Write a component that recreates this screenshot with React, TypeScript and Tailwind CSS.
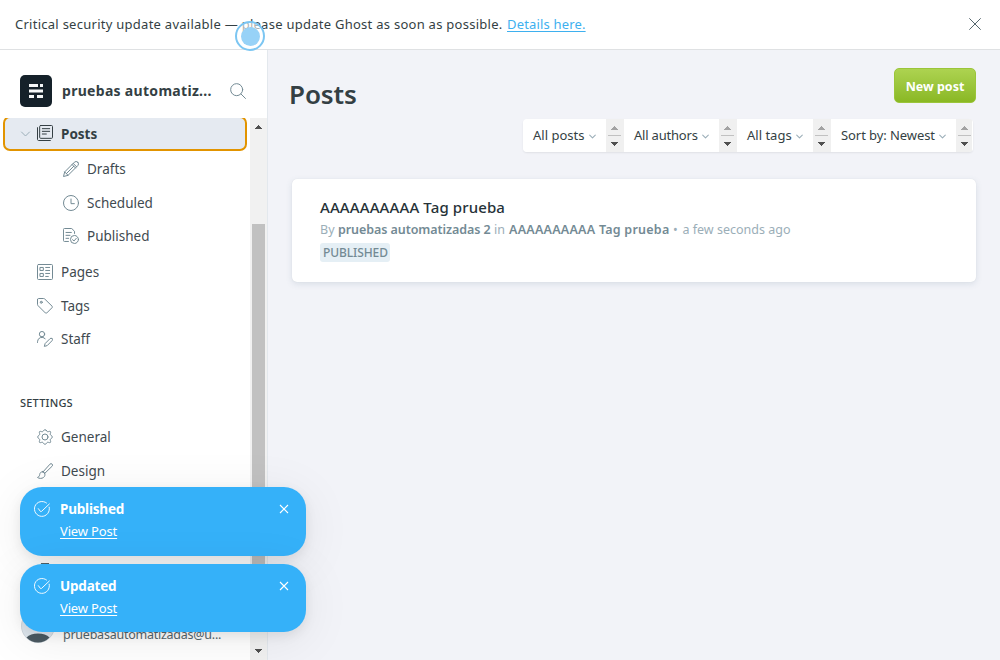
import type { ReactNode } from "react";

function Icon({ children, className = "stroke-[#738a94]" }: { children: ReactNode; className?: string }) {
  return (
    <svg viewBox="0 0 24 24" className={`h-4 w-4 shrink-0 fill-none ${className}`} strokeWidth={1.5} strokeLinecap="round" strokeLinejoin="round">
      {children}
    </svg>
  );
}

const PostsIcon = () => (
  <Icon className="stroke-[#343f44]">
    <rect x="4" y=".75" width="19.25" height="19.25" rx="1.5" />
    <path d="M.75 4v17.75c0 .8.7 1.5 1.5 1.5H20M8 5.5h11M8 9.5h11M8 13.5h6" />
  </Icon>
);
const DraftsIcon = () => (
  <Icon>
    <path d="M22.2 1.8a3.6 3.6 0 0 0-5.1 0L2.5 16.4.75 23.25l6.85-1.75L22.2 6.9a3.6 3.6 0 0 0 0-5.1zM15.3 3.6l5.1 5.1M13.6 5.3l5.1 5.1M2.5 16.4l5.1 5.1M5.2 18.8 16.2 7.8" />
  </Icon>
);
const ScheduledIcon = () => (
  <Icon>
    <circle cx="12" cy="12" r="11.25" />
    <path d="M12 6v7h5" />
  </Icon>
);
const PublishedIcon = () => (
  <Icon>
    <path d="M8.2 20.2H2.2a1.5 1.5 0 0 1-1.5-1.5V2.2A1.5 1.5 0 0 1 2.2.75h10.9l4.2 4.2V8.2M4.5 6.7h8M4.5 11h6M4.5 15.5h4" />
    <circle cx="17.2" cy="17.2" r="6" />
    <path d="m19.9 15.5-3.3 3.9-2.3-1.9" />
  </Icon>
);
const PagesIcon = () => (
  <Icon>
    <rect x=".75" y=".75" width="22.5" height="22.5" rx="1.5" />
    <path d="M5 5.2h4.5v4.5H5zM5 14.2h4.5v4.5H5zM13 5.2h6M13 9.7h6M13 14.2h6M13 18.7h4" />
  </Icon>
);
const TagsIcon = () => (
  <Icon>
    <path d="M.75 2.25v7.2c0 .8.3 1.5.9 2.1l10.9 10.9a1.5 1.5 0 0 0 2.1 0l8-8a1.5 1.5 0 0 0 0-2.1L11.7 1.6A3 3 0 0 0 9.6.75H2.25a1.5 1.5 0 0 0-1.5 1.5z" />
    <circle cx="6.4" cy="6.4" r="1.5" />
  </Icon>
);
const StaffIcon = () => (
  <Icon>
    <circle cx="7.5" cy="4.7" r="4" />
    <path d="M.75 17.2v-1a6.7 6.7 0 0 1 11.5-4.7M22.6 11.4a2.1 2.1 0 0 0-3 0l-7.4 7.4-1.2 4.3 4.3-1.2 7.3-7.4a2.2 2.2 0 0 0 0-3.1z" />
  </Icon>
);
const GeneralIcon = () => (
  <Icon>
    <circle cx="12" cy="12" r="4.5" />
    <path d="M13.6 1.8l1.2 1.6a2.1 2.1 0 0 0 2.3.6l1.8-.5c1-.2 1.8.6 1.6 1.6l-.5 1.8a2.1 2.1 0 0 0 .6 2.3l1.6 1.2c.9.8.9 2.4 0 3.2l-1.6 1.2a2.1 2.1 0 0 0-.6 2.3l.5 1.8c.2 1-.6 1.8-1.6 1.6l-1.8-.5a2.1 2.1 0 0 0-2.3.6l-1.2 1.6c-.8.9-2.4.9-3.2 0l-1.2-1.6a2.1 2.1 0 0 0-2.3-.6l-1.8.5c-1 .2-1.8-.6-1.6-1.6l.5-1.8a2.1 2.1 0 0 0-.6-2.3l-1.6-1.2c-.9-.8-.9-2.4 0-3.2l1.6-1.2a2.1 2.1 0 0 0 .6-2.3l-.5-1.8c-.2-1 .6-1.8 1.6-1.6l1.8.5a2.1 2.1 0 0 0 2.3-.6l1.2-1.6c.8-.9 2.4-.9 3.2 0z" />
  </Icon>
);
const DesignIcon = () => (
  <Icon>
    <path d="M9.2 13.2 19.5 1.7a2.2 2.2 0 0 1 3.2 3.1L11.7 15.5M9.2 13.2l2.5 2.3M8.4 13.1c-2.5 0-4 1.6-4.3 4-.2 1.9-1 3.5-3.3 4.6 2.2 1.7 6.4 2 9 0 2-1.6 2.5-3.8 1.7-5.9-.5-1.5-1.6-2.5-3.1-2.7z" />
  </Icon>
);
const LabsIcon = () => (
  <Icon className="stroke-[#54666d]">
    <path d="M6.5.75h11M8.5.75v8.5L2 20.5c-.7 1.4.2 2.75 1.7 2.75h16.6c1.5 0 2.4-1.35 1.7-2.75L15.5 9.25V.75M6 15h12" />
  </Icon>
);

function Chevron({ className = "" }: { className?: string }) {
  return (
    <svg viewBox="0 0 10 6" className={`shrink-0 fill-none stroke-[#9baeb8] ${className}`} strokeLinecap="round" strokeLinejoin="round">
      <path d="M1 1l4 4 4-4" />
    </svg>
  );
}

function Arrow({ down = false, className = "" }: { down?: boolean; className?: string }) {
  return (
    <svg viewBox="0 0 8 4" className={`h-1 w-2 shrink-0 ${className}`} shapeRendering="crispEdges">
      <path d={down ? "M0 0h8L4 4z" : "M0 4h8L4 0z"} />
    </svg>
  );
}

function NavRow({ icon, label, className }: { icon: ReactNode; label: string; className: string }) {
  return (
    <a className={`flex h-[34px] shrink-0 items-center text-[13.5px] text-[#3f4a50] ${className}`}>
      {icon}
      <span className="ml-2 leading-5">{label}</span>
    </a>
  );
}

function Filter({ label, className, last = false }: { label: string; className: string; last?: boolean }) {
  return (
    <div className={`flex h-[33px] shrink-0 ${className}`}>
      <div className="flex flex-1 items-center bg-white pl-[10px]">
        <span className="text-[13px] whitespace-nowrap text-[#343f44]">{label}</span>
        <Chevron className="mt-px mr-[10px] ml-auto h-[5px] w-[7px] [stroke-width:1.5]" />
      </div>
      <div className={`flex flex-col items-start bg-[#f0f0f0] ${last ? "w-[17px] border-r border-white" : "w-[18px]"}`}>
        <Arrow className="mt-[7px] ml-1 fill-[#a3a3a3]" />
        <div className="mt-[5px] ml-[2px] h-px w-[13px] bg-[#c1c1c1]" />
        <Arrow down className="mt-[6px] ml-1 fill-[#505050]" />
      </div>
    </div>
  );
}

function Toast({ title, className }: { title: string; className: string }) {
  return (
    <div className={`flex w-[286px] rounded-[22px] bg-[#35b1f9] pt-[14px] pl-[14px] text-white shadow-[0_4px_12px_rgba(0,0,0,0.08),0_8px_50px_rgba(0,0,0,0.08)] ${className}`}>
      <svg viewBox="0 0 24 24" className="h-4 w-4 shrink-0 fill-none stroke-white" strokeWidth={1.4} strokeLinecap="round" strokeLinejoin="round">
        <path d="m6.5 11.5 3.2 4.2a1 1 0 0 0 1.5 0L23 4.5" />
        <path d="M22.8 9.2a11.2 11.2 0 1 1-4-6.2" />
      </svg>
      <div className="-mt-[2px] ml-[10px] flex flex-1 flex-col items-start">
        <span className="text-[13.5px] leading-[20px] font-bold tracking-[-0.2px]">{title}</span>
        <a className="mt-[2px] text-[13px] leading-[20px] tracking-[-0.15px] underline underline-offset-2">View Post</a>
      </div>
      <svg viewBox="0 0 10 10" className="mt-[3px] mr-[17px] h-[10px] w-[10px] stroke-white" strokeWidth={1.1}>
        <path d="M1 1l8 8M9 1l-8 8" />
      </svg>
    </div>
  );
}

export default function App() {
  return (
    <div className="relative flex h-[660px] w-[1000px] flex-col overflow-hidden bg-white font-['Noto_Sans',sans-serif] text-[#343f44]">
      <div className="flex h-[50px] shrink-0 items-center border-b border-[#dfe1e3] pr-[19px] pl-[15px] text-[13px]">
        <span className="tracking-[0.264px] whitespace-nowrap">Critical security update available — please update Ghost as soon as possible.</span>
        <a className="ml-[4.5px] tracking-[0.17px] whitespace-nowrap text-[#3eb0ef] underline underline-offset-2">Details here.</a>
        <svg viewBox="0 0 12 12" className="mb-px ml-auto h-3 w-3 stroke-[#54666d]">
          <path d="M.3.3l11.4 11.4M11.7.3L.3 11.7" />
        </svg>
      </div>

      <div className="flex min-h-0 flex-1">
        <aside className="flex w-[268px] shrink-0 flex-col border-r border-[#e3e8ed]">
          <header className="flex h-[68px] shrink-0 items-center pt-[14px] pl-5">
            <svg viewBox="0 0 32 32" className="h-8 w-8 shrink-0">
              <rect width="32" height="32" rx="5" fill="#15212a" />
              <path d="M9 9h9v3H9zM20 9h3v3h-3zM9 14.5h14v3H9zM9 20h5v3H9zM17 20h6v3h-6z" fill="#f5f7f8" />
            </svg>
            <span className="mb-[2px] ml-[10px] text-[14px] font-bold tracking-[0.3px] whitespace-nowrap">pruebas automatiz...</span>
            <Icon className="mr-[21px] ml-auto stroke-[#738a94]">
              <circle cx="10" cy="10" r="9" />
              <path d="m16.5 16.5 6.7 6.7" />
            </Icon>
          </header>
          <div className="flex min-h-0 flex-1">
            <nav className="flex w-[250px] flex-col overflow-hidden">
              <a className="-mt-[2px] ml-[3px] flex h-[35px] w-[244px] shrink-0 items-center rounded-[7px] border-2 border-[#e29400] bg-[#e5eaf1] pl-[15px]">
                <Chevron className="h-[6px] w-[11px]" />
                <span className="mb-px ml-[6px] flex"><PostsIcon /></span>
                <span className="ml-2 text-[13.5px] leading-5 font-bold">Posts</span>
              </a>
              <NavRow icon={<DraftsIcon />} label="Drafts" className="mt-[1px] pl-[63px]" />
              <NavRow icon={<ScheduledIcon />} label="Scheduled" className="pl-[63px]" />
              <NavRow icon={<PublishedIcon />} label="Published" className="-mt-px pl-[63px]" />
              <NavRow icon={<PagesIcon />} label="Pages" className="mt-[2px] pl-[37px]" />
              <NavRow icon={<TagsIcon />} label="Tags" className="pl-[37px]" />
              <NavRow icon={<StaffIcon />} label="Staff" className="-mt-px pl-[37px]" />
              <h4 className="mt-[37px] flex h-[20px] shrink-0 items-center pl-5 text-[11px] font-medium tracking-[0.2px]">SETTINGS</h4>
              <NavRow icon={<GeneralIcon />} label="General" className="mt-[7px] pl-[37px]" />
              <NavRow icon={<DesignIcon />} label="Design" className="pl-[37px]" />
              <div className="mt-[75px] flex h-4 shrink-0 pl-[37px]"><LabsIcon /></div>
              <div className="mt-auto mb-[9px] flex items-end pl-[21px]">
                <svg viewBox="0 0 34 34" className="mb-[8px] h-[34px] w-[34px]">
                  <circle cx="17" cy="17" r="16.5" fill="#dfe7ee" stroke="#cfd8df" />
                  <path d="M5.5 28.5C8 26 12 24.5 17 24.5s9 1.5 11.5 4A16 16 0 0 1 17 33.5a16 16 0 0 1-11.5-5z" fill="#4b5a62" />
                </svg>
                <span className="mb-[6px] ml-2 text-[12.5px] tracking-[-0.24px] whitespace-nowrap text-[#54666d]">pruebasautomatizadas@u...</span>
              </div>
            </nav>
            <div className="flex w-[17px] flex-col items-start bg-[#f1f1f1]">
              <Arrow className="mt-[7px] ml-1 fill-[#505050]" />
              <div className="mt-[95px] ml-[2px] w-[13px] flex-1 bg-[#c1c1c1]" />
              <Arrow down className="mt-[30px] mb-[7px] ml-1 fill-[#505050]" />
            </div>
          </div>
        </aside>

        <main className="flex flex-1 flex-col bg-[#f2f3f8] pr-6 pl-[22px]">
          <div className="flex pt-[18px]">
            <h1 className="mt-[7px] -ml-px h-[39px] text-[26px] leading-[38px] font-semibold tracking-[-0.1px]">Posts</h1>
            <button className="ml-auto h-[35px] w-[82px] rounded-[5px] border border-[#9bc53a] bg-linear-to-b from-[#add350] to-[#8ab823] pt-[3px] text-[12.5px] font-bold text-white">New post</button>
          </div>
          <div className="mt-[5px] mr-[3px] flex self-end overflow-hidden rounded-[4px] shadow-[0_1px_2px_rgba(0,0,0,0.08)]">
            <Filter label="All posts" className="w-[101px]" />
            <Filter label="All authors" className="w-[113px] tracking-[-0.2px]" />
            <Filter label="All tags" className="w-[94px]" />
            <Filter label="Sort by: Newest" className="w-[142px] tracking-[-0.08px]" last />
          </div>
          <section className="mt-[27px] ml-[2px] flex h-[103px] flex-col items-start rounded-[5px] bg-white pt-[17px] pl-7 shadow-[0_0_1px_rgba(0,0,0,0.1),0_2px_6px_rgba(90,120,140,0.16)]">
            <h3 className="text-[15px] leading-[22px] font-medium tracking-[0.11px] text-[#263238]">AAAAAAAAAA Tag prueba</h3>
            <p className="mt-[2px] flex items-baseline text-[12.5px] leading-[20px] text-[#9baeb8]">
              <span className="w-[18px]">By</span>
              <b className="w-[156px] font-semibold tracking-[-0.07px] whitespace-nowrap text-[#738a94]">pruebas automatizadas 2</b>
              <span className="w-[15px]">in</span>
              <b className="w-[164px] font-semibold tracking-[0.24px] whitespace-nowrap text-[#738a94]">AAAAAAAAAA Tag prueba</b>
              <span className="w-[9.5px]">•</span>
              <span>a few seconds ago</span>
            </p>
            <span className="mt-[3px] flex h-[19px] w-[70px] items-center rounded-[3px] bg-[#e5eff5] pl-[3px] text-[12px] font-medium tracking-[-0.1px] text-[#738a94]">PUBLISHED</span>
          </section>
        </main>
      </div>

      <div className="absolute top-[487px] left-5 flex flex-col gap-2">
        <Toast title="Published" className="h-[69px]" />
        <Toast title="Updated" className="h-[68px]" />
      </div>
      <div className="absolute top-[21px] left-[235px] flex h-[30px] w-[30px] items-center justify-center rounded-full border-2 border-[#7cc6f2] bg-white/60">
        <div className="h-[19px] w-[19px] rounded-full bg-[#97d2f7]" />
      </div>
    </div>
  );
}
